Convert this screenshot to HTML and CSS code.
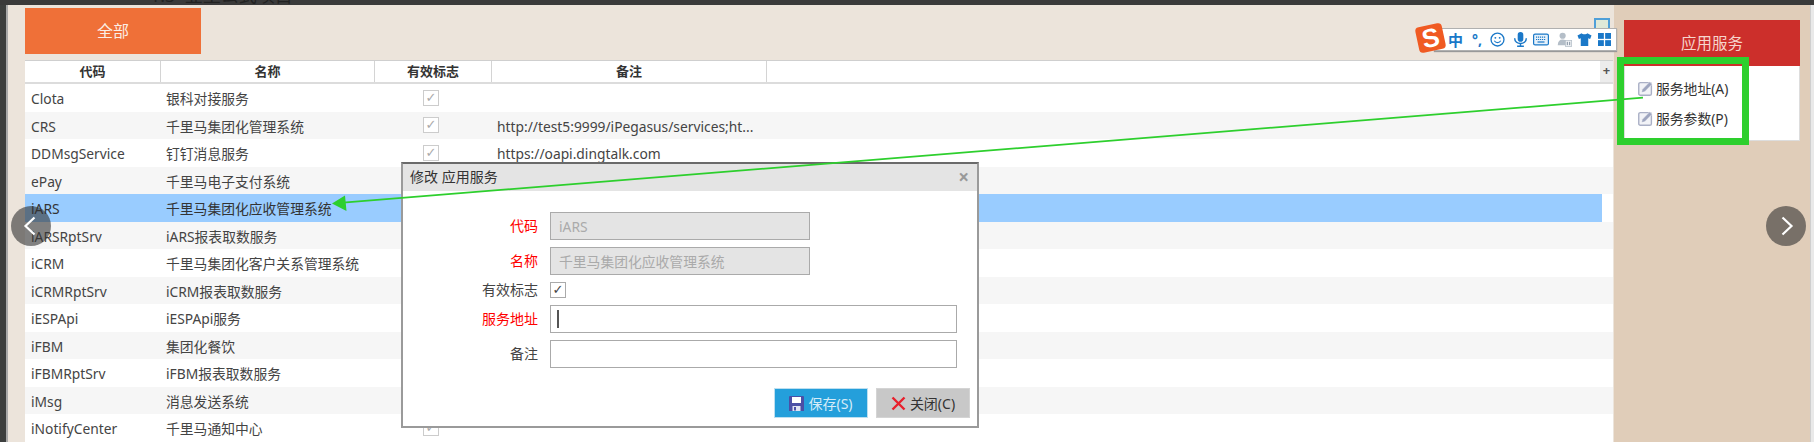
FILE: index.html
```html
<!DOCTYPE html>
<html lang="zh-CN">
<head>
    <meta charset="UTF-8">
    <title>应用服务</title>
    <link rel="stylesheet" href="styles.css">
</head>
<body>
    <div class="topbar"><span class="topbar-text">1.3 &nbsp;业主公式项目</span></div>

    <div class="workspace">
        <div class="edge-left"></div>

        <div class="main">
            <div class="tabs">
                <div class="tab-all">全部</div>
            </div>

            <div class="grid">
                <div class="grid-head">
                    <div class="head-cell">代码</div>
                    <div class="head-cell">名称</div>
                    <div class="head-cell">有效标志</div>
                    <div class="head-cell">备注</div>
                    <div class="head-fill"></div>
                    <div class="head-plus">+</div>
                </div>

                <div class="row">
                    <span class="cell">Clota</span><span class="cell">银科对接服务</span>
                    <span class="cell-check"><span class="check">✓</span></span><span class="cell"></span>
                </div>
                <div class="row alt">
                    <span class="cell">CRS</span><span class="cell">千里马集团化管理系统</span>
                    <span class="cell-check"><span class="check">✓</span></span><span class="cell">http://test5:9999/iPegasus/services;ht...</span>
                </div>
                <div class="row">
                    <span class="cell">DDMsgService</span><span class="cell">钉钉消息服务</span>
                    <span class="cell-check"><span class="check">✓</span></span><span class="cell">https://oapi.dingtalk.com</span>
                </div>
                <div class="row alt">
                    <span class="cell">ePay</span><span class="cell">千里马电子支付系统</span>
                    <span class="cell-check"><span class="check">✓</span></span><span class="cell"></span>
                </div>
                <div class="row selected">
                    <span class="cell">iARS</span><span class="cell">千里马集团化应收管理系统</span>
                    <span class="cell-check"><span class="check">✓</span></span><span class="cell"></span>
                </div>
                <div class="row alt">
                    <span class="cell">iARSRptSrv</span><span class="cell">iARS报表取数服务</span>
                    <span class="cell-check"><span class="check">✓</span></span><span class="cell"></span>
                </div>
                <div class="row">
                    <span class="cell">iCRM</span><span class="cell">千里马集团化客户关系管理系统</span>
                    <span class="cell-check"><span class="check">✓</span></span><span class="cell"></span>
                </div>
                <div class="row alt">
                    <span class="cell">iCRMRptSrv</span><span class="cell">iCRM报表取数服务</span>
                    <span class="cell-check"><span class="check">✓</span></span><span class="cell"></span>
                </div>
                <div class="row">
                    <span class="cell">iESPApi</span><span class="cell">iESPApi服务</span>
                    <span class="cell-check"><span class="check">✓</span></span><span class="cell"></span>
                </div>
                <div class="row alt">
                    <span class="cell">iFBM</span><span class="cell">集团化餐饮</span>
                    <span class="cell-check"><span class="check">✓</span></span><span class="cell"></span>
                </div>
                <div class="row">
                    <span class="cell">iFBMRptSrv</span><span class="cell">iFBM报表取数服务</span>
                    <span class="cell-check"><span class="check">✓</span></span><span class="cell"></span>
                </div>
                <div class="row alt">
                    <span class="cell">iMsg</span><span class="cell">消息发送系统</span>
                    <span class="cell-check"><span class="check">✓</span></span><span class="cell"></span>
                </div>
                <div class="row">
                    <span class="cell">iNotifyCenter</span><span class="cell">千里马通知中心</span>
                    <span class="cell-check"><span class="check">✓</span></span><span class="cell"></span>
                </div>
            </div>
        </div>

        <div class="side">
            <div class="side-card">
                <div class="side-title">应用服务</div>
                <div class="side-menu">
                    <div class="side-item">
                        <svg class="pencil" viewBox="0 0 14 14"><rect x=".7" y="1.500" width="11.800" height="11.800" rx="1.500" fill="#f2f3f7" stroke="#aab0c6" stroke-width="1.300"/><path d="M3.200 10.800l.8-3L10.800.8l2.400 2.300-6.900 7z" fill="#9ea5bf" stroke="#fff" stroke-width=".5"/></svg>
                        <span>服务地址(A)</span>
                    </div>
                    <div class="side-item">
                        <svg class="pencil" viewBox="0 0 14 14"><rect x=".7" y="1.500" width="11.800" height="11.800" rx="1.500" fill="#f2f3f7" stroke="#aab0c6" stroke-width="1.300"/><path d="M3.200 10.800l.8-3L10.800.8l2.400 2.300-6.900 7z" fill="#9ea5bf" stroke="#fff" stroke-width=".5"/></svg>
                        <span>服务参数(P)</span>
                    </div>
                </div>
            </div>
        </div>

        <div class="edge-right"></div>
    </div>

    <!-- carousel arrows -->
    <div class="nav nav-prev">
        <svg viewBox="0 0 40 40"><path d="M23.500 11.500L14.500 20l9 8.500" fill="none" stroke="#fff" stroke-width="2.200"/></svg>
    </div>
    <div class="nav nav-next">
        <svg viewBox="0 0 40 40"><path d="M16.500 11.500l9 8.500-9 8.500" fill="none" stroke="#fff" stroke-width="2.200"/></svg>
    </div>

    <!-- input method bar -->
    <div class="ime-calendar"></div>
    <div class="ime">
        <div class="ime-logo"><span class="ime-logo-s">S</span></div>
        <span class="ime-zh">中</span>
        <span class="ime-punct">°,</span>
        <svg class="ime-icon" viewBox="0 0 16 16"><circle cx="8" cy="8" r="6.900" fill="none" stroke="#1a78c8" stroke-width="1.400"/><circle cx="5.700" cy="6.200" r="1" fill="#1a78c8"/><circle cx="10.300" cy="6.200" r="1" fill="#1a78c8"/><path d="M4.600 9.400c1.600 2.600 5.200 2.600 6.800 0" fill="none" stroke="#1a78c8" stroke-width="1.200"/></svg>
        <svg class="ime-icon" viewBox="0 0 16 16"><rect x="5" y="0" width="6" height="10.500" rx="3" fill="#1a78c8"/><path d="M1.800 6.600c0 7.400 12.400 7.400 12.400 0M8 12.500V15M4.400 15.300h7.200" fill="none" stroke="#1a78c8" stroke-width="1.600"/></svg>
        <svg class="ime-icon ime-kbd" viewBox="0 0 16 12"><rect x=".6" y=".6" width="14.800" height="10.800" rx="1.500" fill="#e6f1fa" stroke="#1a78c8" stroke-width="1.200"/><path d="M3 3.600h10M3 6h10" stroke="#1a78c8" stroke-width="1.200" stroke-dasharray="1.200 .8"/><path d="M4.500 8.500h7" stroke="#1a78c8" stroke-width="1.200"/></svg>
        <svg class="ime-icon" viewBox="0 0 16 16"><circle cx="6" cy="4" r="3.300" fill="#b4bec8"/><path d="M.8 14c0-4 2-6 5.200-6 1.400 0 2.400.3 3.200 1v5z" fill="#b4bec8"/><rect x="9" y="9" width="6.600" height="6.400" fill="#eef1f4" stroke="#b4bec8" stroke-width=".8"/><path d="M11 10.500v3.500M13.500 10.500v3.500" stroke="#7a8a9a"/></svg>
        <svg class="ime-icon ime-shirt" viewBox="0 0 16 16"><path d="M5 1.200L.5 3.600l1.500 3.800 2-.7V15h8V6.700l2 .7 1.500-3.800L11 1.200c-.8 1.600-5.200 1.600-6 0z" fill="#1a78c8"/></svg>
        <svg class="ime-icon ime-last" viewBox="0 0 14 14"><rect x="0" y="0" width="6.300" height="6.300" fill="#1a78c8"/><rect x="7.700" y="0" width="6.300" height="6.300" fill="#1a78c8"/><rect x="0" y="7.700" width="6.300" height="6.300" fill="#1a78c8"/><rect x="7.700" y="7.700" width="6.300" height="6.300" fill="#1a78c8"/></svg>
    </div>

    <!-- edit dialog -->
    <div class="dialog">
        <div class="dialog-title">
            <span>修改 应用服务</span>
            <span class="dialog-close">×</span>
        </div>
        <div class="form">
            <label class="form-label required">代码</label>
            <input class="form-input short" type="text" value="iARS" disabled>
            <label class="form-label required">名称</label>
            <input class="form-input short" type="text" value="千里马集团化应收管理系统" disabled>
            <label class="form-label">有效标志</label>
            <span class="check check-on">✓</span>
            <label class="form-label required">服务地址</label>
            <div class="caret-wrap">
                <input class="form-input long" type="text">
                <span class="caret"></span>
            </div>
            <label class="form-label">备注</label>
            <input class="form-input long" type="text">
        </div>
        <div class="dialog-buttons">
            <button class="btn btn-save">
                <svg class="btn-icon" viewBox="0 0 15 15"><path d="M0 1a1 1 0 0 1 1-1h13a1 1 0 0 1 1 1v14H0z" fill="#4b4fa6"/><rect x="3" y="1" width="9" height="6" fill="#fff"/><rect x="3.500" y="10" width="8" height="5" fill="#dfe2f2"/><rect x="5" y="11" width="2" height="3.500" fill="#4b4fa6"/></svg>
                <span>保存(S)</span>
            </button>
            <button class="btn btn-close">
                <svg class="btn-icon" viewBox="0 0 15 15"><path d="M1.500 1.500l12 12M13.500 1.500l-12 12" stroke="#e8202c" stroke-width="2.400" fill="none"/></svg>
                <span>关闭(C)</span>
            </button>
        </div>
    </div>

    <!-- screenshot markup -->
    <div class="mark-box"></div>
    <svg class="mark-arrow" viewBox="0 0 1814 442">
        <path d="M1643 97.700L343 202.600" stroke="#2dcf2d" stroke-width="1.800" fill="none"/>
        <path d="M332 203.500L345 195.500L346.500 211z" fill="#2dcf2d"/>
    </svg>
</body>
</html>
```

FILE: styles.css
```css
html, body {
    margin: 0;
    height: 442px;
    overflow: hidden;
}
body {
    font-family: "Noto Sans", "Noto Sans CJK SC", sans-serif;
    font-size: 14px;
    color: #444;
    background-color: #ece4db;
    display: flex;
    flex-direction: column;
}
.topbar {
    height: 5px;
    flex: none;
    background-color: #3a3a3a;
    overflow: hidden;
    padding-left: 150px;
}
.topbar-text {
    display: block;
    font-size: 18px;
    line-height: 18px;
    margin-top: -14px;
    color: #222;
}
.workspace {
    flex: 1;
    display: flex;
    min-height: 0;
}
.edge-left {
    width: 6px;
    background-color: #3d3f3e;
    border-right: 2px solid #a9a9a9;
}
.edge-right {
    width: 4px;
    background-color: #e9e9e9;
    border-left: 1px solid #cfcfcf;
    box-sizing: border-box;
}
.main {
    width: 1588px;
    padding: 3px 1px 0 17px;
    display: flex;
    flex-direction: column;
}
.tabs {
    height: 52px;
    flex: none;
}
.tab-all {
    width: 176px;
    height: 46px;
    background-color: #ef7038;
    color: #fbeee6;
    font-size: 16px;
    line-height: 47px;
    text-align: center;
}

/* grid */
.grid {
    flex: 1;
    background-color: #fff;
    overflow: hidden;
}
.grid-head {
    display: grid;
    grid-template-columns: 136px 214px 117px 275px 1fr 13px;
    height: 24px;
    box-sizing: border-box;
    border-top: 1px solid #cfcfcf;
    border-bottom: 2px solid #dcdcdc;
}
.head-cell {
    font-weight: bold;
    font-size: 13px;
    line-height: 21px;
    color: #333;
    text-align: center;
    border-right: 1px solid #d4d4d4;
}
.head-plus {
    background-color: #ececec;
    font-weight: bold;
    font-size: 13px;
    line-height: 19px;
    text-align: center;
    color: #555;
}
.row {
    display: grid;
    grid-template-columns: 135px 214px 117px 275px;
    height: 27.5px;
    font-size: 13.8px;
    line-height: 29px;
}
.row.alt {
    background-color: #f6f6f6;
}
.row.selected {
    background-color: #99ccff;
    color: #333;
    margin-right: 11px;
}
.cell {
    padding-left: 6px;
    white-space: nowrap;
    overflow: hidden;
}
.cell-check {
    display: flex;
    align-items: center;
    justify-content: center;
    padding-right: 3px;
}
.check {
    width: 16px;
    height: 16px;
    box-sizing: border-box;
    border: 1px solid #ccc;
    background-color: #fff;
    color: #aaa;
    font-family: "DejaVu Sans", sans-serif;
    font-size: 13px;
    line-height: 14px;
    text-align: center;
}
.check-on {
    border-color: #aaa;
    color: #444;
}

/* right panel */
.side {
    flex: 1;
    background-color: #e0cdb9;
    padding: 15px 10px 0 10px;
}
.side-card {
    background-color: #fff;
    border: 1px solid #ddd;
    border-top: none;
    height: 120px;
}
.side-title {
    height: 46px;
    margin: 0 -1px;
    background-color: #cc2f2b;
    color: #f7d5cd;
    font-size: 15.5px;
    line-height: 46px;
    text-align: center;
}
.side-menu {
    padding: 7px 0 0 13px;
}
.side-item {
    height: 30px;
    display: flex;
    align-items: center;
    gap: 3px;
    color: #333;
    font-size: 13.8px;
}
.pencil {
    width: 15px;
    height: 15px;
}

/* overlays */
.nav {
    position: absolute;
    top: 206px;
    width: 40px;
    height: 40px;
    border-radius: 50%;
    background-color: rgba(50, 50, 50, 0.6);
}
.nav-prev {
    left: 11px;
}
.nav-next {
    left: 1766px;
}
.ime-calendar {
    position: absolute;
    left: 1594px;
    top: 18px;
    width: 12px;
    height: 10px;
    border: 2px solid #4f9fd8;
    border-bottom: none;
    background-color: #dfe9d8;
}
.ime {
    position: absolute;
    left: 1434px;
    top: 28px;
    width: 183px;
    height: 23px;
    box-sizing: border-box;
    background-color: #fff;
    border: 1px solid #b0b0b0;
    box-shadow: 0 1px 1px #999;
    display: flex;
    align-items: center;
}
.ime-logo {
    position: absolute;
    left: -18px;
    top: -4px;
    width: 27px;
    height: 26px;
    background-color: #f05a22;
    border-radius: 4px;
    transform: rotate(-12deg);
    text-align: center;
}
.ime-logo-s {
    color: #fff;
    font-family: "Liberation Sans", sans-serif;
    font-weight: bold;
    font-size: 26px;
    line-height: 26px;
}
.ime-zh {
    margin-left: 13px;
    color: #1a78c8;
    font-weight: bold;
    font-size: 15px;
}
.ime-punct {
    margin-left: 9px;
    width: 10px;
    color: #1a78c8;
    font-weight: bold;
    font-size: 14px;
    line-height: 14px;
}
.ime-icon {
    width: 15px;
    height: 15px;
    margin-left: 8px;
}
.ime-kbd {
    width: 16px;
    height: 13px;
    margin-left: 5px;
}
.ime-shirt {
    margin-left: 5px;
}
.ime-last {
    width: 13px;
    height: 13px;
    margin-left: 6px;
}

.dialog {
    position: absolute;
    left: 401px;
    top: 162px;
    width: 578px;
    height: 266px;
    box-sizing: border-box;
    background-color: #fff;
    border: 2px solid #9a9a9a;
    border-top-color: #6a6a6a;
    display: flex;
    flex-direction: column;
}
.dialog-title {
    height: 27px;
    flex: none;
    background-color: #e4e4e4;
    padding: 0 8px 0 7px;
    display: flex;
    justify-content: space-between;
    line-height: 26px;
    color: #333;
}
.dialog-close {
    color: #999;
    font-weight: bold;
    font-size: 19px;
}
.form {
    display: grid;
    grid-template-columns: 135px 1fr;
    column-gap: 12px;
    row-gap: 7px;
    padding-top: 21px;
    align-items: center;
}
.form-label {
    text-align: right;
    color: #444;
    line-height: 16px;
}
.form-label.required {
    color: #f00;
}
.form-input {
    display: block;
    height: 28px;
    box-sizing: border-box;
    border: 1px solid #aaa;
    font-family: inherit;
    font-size: 13.8px;
    padding: 0 8px;
    background-color: #fff;
}
.form-input:disabled {
    background-color: #e4e4e4;
    color: #aaa;
}
.short {
    width: 260px;
}
.long {
    width: 407px;
}
.caret-wrap {
    position: relative;
}
.caret {
    position: absolute;
    left: 7px;
    top: 5px;
    width: 2px;
    height: 18px;
    background-color: #555;
}
.dialog-buttons {
    display: flex;
    justify-content: flex-end;
    gap: 8px;
    margin-top: auto;
    padding: 0 7px 8px 0;
}
.btn {
    width: 94px;
    height: 30px;
    box-sizing: border-box;
    border: 1px solid #d4d4d4;
    padding: 0;
    font-family: inherit;
    font-size: 14px;
    display: flex;
    align-items: center;
    justify-content: center;
    gap: 4px;
}
.btn-save {
    background-color: #249fdb;
    color: #d5ecf8;
    border-color: #bcdff0;
}
.btn-close {
    background-color: #c8c8c8;
    color: #333;
}
.btn-icon {
    width: 15px;
    height: 15px;
}

/* annotation */
.mark-box {
    position: absolute;
    left: 1617px;
    top: 57px;
    width: 132px;
    height: 88px;
    box-sizing: border-box;
    border: 7px solid #2dcf2d;
}
.mark-arrow {
    position: absolute;
    left: 0;
    top: 0;
    width: 1814px;
    height: 442px;
    pointer-events: none;
}
```
